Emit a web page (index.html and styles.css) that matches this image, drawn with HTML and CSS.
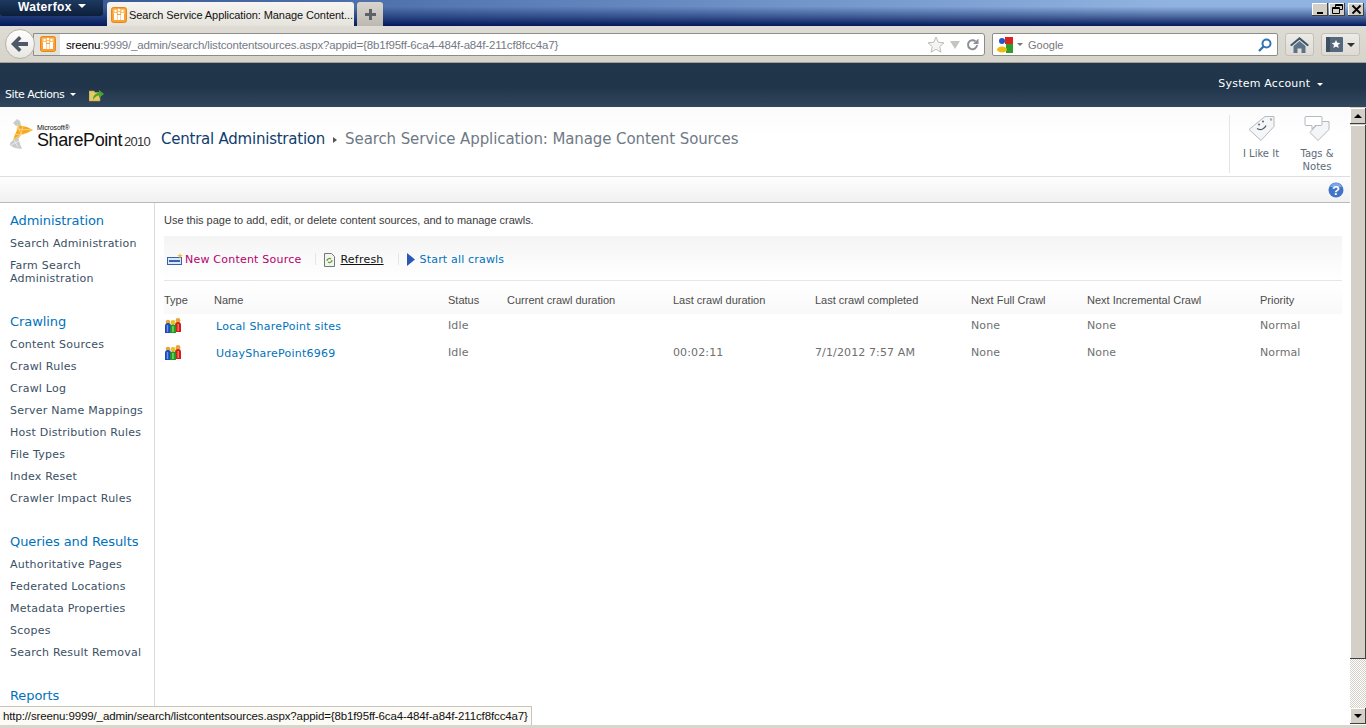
FILE: index.html
```html
<!DOCTYPE html>
<html lang="en">
<head>
<meta charset="utf-8">
<title>Search Service Application: Manage Content Sources</title>
<link rel="stylesheet" href="styles.css">
</head>
<body>
<svg class="defs" width="0" height="0" aria-hidden="true">
  <defs>
    <g id="fav">
      <rect x="0.5" y="0.5" width="15" height="15" rx="2" fill="#f9a234" stroke="#e8861a"/>
      <rect x="2" y="2" width="12" height="5" fill="#fbb964"/>
      <g fill="#fff">
        <circle cx="4.500" cy="4" r="1.200"/><rect x="3" y="6" width="3" height="7"/>
        <circle cx="8" cy="3" r="1.200"/><rect x="7" y="5" width="2" height="2"/>
        <circle cx="11.500" cy="4" r="1.200"/><rect x="10" y="6" width="3" height="7"/>
        <rect x="6.500" y="8" width="3" height="5"/>
      </g>
    </g>
    <g id="people">
      <circle cx="3" cy="4" r="2.300" fill="#e8a63a"/>
      <path d="M0 8a3 3 0 0 1 6 0v7H0z" fill="#1d49bc"/>
      <path d="M1.800 7h1.400v7H1.800z" fill="#6f97ea"/>
      <circle cx="13" cy="2.500" r="2.400" fill="#e8a63a"/>
      <path d="M10 7a3 3 0 0 1 6 0v7h-6z" fill="#cf1f18"/>
      <path d="M12.500 6h1.400v7h-1.400z" fill="#f07a70"/>
      <circle cx="8" cy="4.500" r="2.400" fill="#e6c224"/>
      <path d="M5 9.500a3 3 0 0 1 6 0V15H5z" fill="#229a24"/>
      <path d="M7.200 8h1.500v6H7.200z" fill="#7ad86c"/>
    </g>
  </defs>
</svg>
<div class="window">
  <header class="tabbar">
    <div class="appbutton">Waterfox <span class="caret caret-white"></span></div>
    <div class="tab">
      <svg class="icon16" viewBox="0 0 16 16"><use href="#fav"/></svg>
      <span class="tabtitle">Search Service Application: Manage Content...</span>
    </div>
    <div class="newtab">
      <svg width="11" height="11" viewBox="0 0 11 11"><path d="M4 0h3v4h4v3H7v4H4V7H0V4h4z" fill="#5d6269"/></svg>
    </div>
    <div class="winbuttons">
      <span class="winbtn"><svg width="11" height="11" viewBox="0 0 11 11"><rect x="2" y="8" width="6" height="2" fill="#000"/></svg></span>
      <span class="winbtn"><svg width="11" height="11" viewBox="0 0 11 11"><path d="M3.500 3V.5h7v5H8M.5 3.500h7v6h-7zM3.500 1.500h7M.5 4.500h7" fill="none" stroke="#000"/></svg></span>
      <span class="winbtn winclose"><svg width="11" height="11" viewBox="0 0 11 11"><path d="M1.500 1.500l8 8M9.500 1.500l-8 8" stroke="#000" stroke-width="1.800"/></svg></span>
    </div>
  </header>

  <nav class="navbar">
    <div class="back">
      <svg width="20" height="18" viewBox="0 0 20 18"><path d="M9 1l2.500 2.500L8 7h10v4H8l3.500 3.500L9 17 1 9z" fill="#4d5966"/></svg>
    </div>
    <div class="urlbar">
      <div class="identity"><svg class="icon16" viewBox="0 0 16 16"><use href="#fav"/></svg></div>
      <div class="url"><span class="host">sreenu</span>:9999/_admin/search/listcontentsources.aspx?appid={8b1f95ff-6ca4-484f-a84f-211cf8fcc4a7}</div>
      <svg class="star" width="18" height="17" viewBox="0 0 18 17"><path d="M9 1l2.300 5.300 5.700.5-4.300 3.800 1.300 5.600L9 13.300l-5 2.900 1.300-5.600L1 6.800l5.700-.5z" fill="#f4f4f2" stroke="#bdbdb8"/></svg>
      <span class="dropmark"></span>
      <svg class="reload" width="13" height="13" viewBox="0 0 13 13"><path d="M11 7a4.500 4.500 0 1 1-1.500-3.600" fill="none" stroke="#8a9096" stroke-width="2"/><path d="M12.500.5v5.500H7z" fill="#8a9096"/></svg>
    </div>
    <div class="searchbar">
      <svg class="gicon" width="16" height="16" viewBox="0 0 16 16">
        <rect x="8" y="0" width="8" height="7" fill="#d8261c"/>
        <rect x="0" y="0" width="8" height="8" fill="#fff"/>
        <circle cx="5" cy="4" r="3" fill="#2456c4"/>
        <rect x="9" y="7" width="7" height="9" fill="#2f9e2c"/>
        <ellipse cx="5" cy="12.500" rx="5" ry="3" fill="#eebb10"/>
      </svg>
      <span class="caret caret-grey"></span>
      <span class="searchtext">Google</span>
      <svg class="magnifier" width="14" height="14" viewBox="0 0 14 14"><circle cx="8.500" cy="5.500" r="4" fill="none" stroke="#3374b4" stroke-width="2"/><path d="M5.500 8.500L1 13" stroke="#3374b4" stroke-width="2.400"/></svg>
    </div>
    <div class="toolbtn homebtn">
      <svg width="19" height="16" viewBox="0 0 19 16"><path d="M9.500 0L19 8l-1.500 1.300L9.500 2.800 1.500 9.300 0 8z" fill="#3d5468"/><path d="M3.500 9l6-5 6 5v7h-4v-4.500h-4V16h-4z" fill="#5d7488"/></svg>
    </div>
    <div class="toolbtn bookbtn">
      <svg width="17" height="15" viewBox="0 0 17 15"><rect width="17" height="15" rx="1" fill="#56697c"/><rect width="4" height="15" fill="#3d5062"/><path d="M10 3l1.300 2.800 3 .3-2.300 2 .7 3L10 9.500l-2.700 1.600.7-3-2.300-2 3-.3z" fill="#fff"/></svg>
      <span class="caret caret-dark"></span>
    </div>
  </nav>

  <div class="suite">
    <div class="suiteleft">
      <span class="siteactions">Site Actions <span class="caret caret-small"></span></span>
      <svg class="upfolder" width="16" height="15" viewBox="0 0 16 15"><path d="M0 4h5l1 1.500h5V14H0z" fill="#e8c966" stroke="#b89a3c" stroke-width=".6"/><path d="M4 13c0-5 3-7 6-7V3l5 4-5 4V8.500c-2.500 0-4 1.500-6 4.500z" fill="#46a52e"/></svg>
    </div>
    <span class="account">System Account <span class="caret caret-small"></span></span>
  </div>

  <div class="viewport">
    <div class="page">
      <div class="titlerow">
        <div class="logo">
          <svg class="logomark" width="26" height="30" viewBox="0 0 26 30">
            <path d="M4 4l4-4 3 2 1 4-5 1z" fill="#c9cbcd"/>
            <path d="M9 6l9 2 6 3-6 3-6 2-5 6-3 2 1-6 3-7z" fill="#f6a91e"/>
            <path d="M9 6l3 10M14 7l-2 9 6-2M7 10l17 1M5 15l7 1M3 21l9-5" fill="none" stroke="#fde0a0" stroke-width=".7"/>
            <path d="M3 22c-2 2-3 3-1 5l4 2 7 1-2-5-2-7z" fill="#c8cacc"/>
            <path d="M5 21l4 7M2 26l8-4" fill="none" stroke="#fff" stroke-width=".6"/>
          </svg>
          <div class="logotext">
            <span class="ms">Microsoft®</span>
            <span class="sp">SharePoint<small class="yr">2010</small></span>
          </div>
        </div>
        <div class="crumbs">
          <span class="crumb-root">Central Administration</span>
          <span class="crumb-sep"></span>
          <span class="crumb-page">Search Service Application: Manage Content Sources</span>
        </div>
        <div class="social">
          <div class="socialitem">
            <svg width="30" height="26" viewBox="0 0 30 26"><path d="M19 1h9v10L15 25 3 14z" fill="#f4f5f6" stroke="#b4bac0"/><circle cx="25" cy="4" r="1.200" fill="#a8aeb4"/><path d="M11 13a6 6 0 0 0 9-3" fill="none" stroke="#4d5966" stroke-width="1.200"/><circle cx="13" cy="9" r=".9" fill="#4d5966"/><circle cx="17" cy="6" r=".9" fill="#4d5966"/></svg>
            <span>I Like It</span>
          </div>
          <div class="socialitem notes">
            <svg width="26" height="26" viewBox="0 0 26 26"><path d="M16 6h9v8L14 25 6 17z" fill="#f4f5f6" stroke="#b4bac0"/><path d="M2 1h15a1 1 0 0 1 1 1v7a1 1 0 0 1-1 1h-6l-3 4v-4H2a1 1 0 0 1-1-1V2a1 1 0 0 1 1-1z" fill="#fff" stroke="#b4bac0"/></svg>
            <span>Tags &amp;<br>Notes</span>
          </div>
        </div>
      </div>
      <div class="ribbonrow">
        <svg class="help" width="16" height="16" viewBox="0 0 16 16"><circle cx="8" cy="8" r="7.500" fill="#3f74c8"/><path d="M8 1a7 7 0 0 1 6 4H2a7 7 0 0 1 6-4z" fill="#7ea6e2"/><text x="8" y="12.500" text-anchor="middle" class="helpq">?</text></svg>
      </div>
      <div class="body">
        <aside class="leftnav">
          <h2 class="navhead">Administration</h2>
          <a class="navitem">Search Administration</a>
          <a class="navitem">Farm Search Administration</a>
          <h2 class="navhead gap">Crawling</h2>
          <a class="navitem">Content Sources</a>
          <a class="navitem">Crawl Rules</a>
          <a class="navitem">Crawl Log</a>
          <a class="navitem">Server Name Mappings</a>
          <a class="navitem">Host Distribution Rules</a>
          <a class="navitem">File Types</a>
          <a class="navitem">Index Reset</a>
          <a class="navitem">Crawler Impact Rules</a>
          <h2 class="navhead gap">Queries and Results</h2>
          <a class="navitem">Authoritative Pages</a>
          <a class="navitem">Federated Locations</a>
          <a class="navitem">Metadata Properties</a>
          <a class="navitem">Scopes</a>
          <a class="navitem">Search Result Removal</a>
          <h2 class="navhead gap">Reports</h2>
        </aside>
        <main class="main">
          <p class="intro">Use this page to add, edit, or delete content sources, and to manage crawls.</p>
          <div class="toolbar">
            <span class="tool tool-new">
              <svg width="17" height="13" viewBox="0 0 17 13"><rect x="0.500" y="4.500" width="14" height="7" fill="#dbe8f8" stroke="#3a62a8"/><rect x="2" y="7" width="11" height="2" fill="#3a62a8"/><path d="M13 0l.8 2L16 2.800l-2.200.8L13 6l-.8-2.400L10 2.800l2.200-.8z" fill="#f0c030"/></svg>
              New Content Source
            </span>
            <span class="toolsep"></span>
            <span class="tool tool-refresh">
              <svg width="11" height="14" viewBox="0 0 11 14"><path d="M.500.500h7l3 3v10H.500z" fill="#f4f4ec" stroke="#6e7a80"/><path d="M3 8a2.500 2.500 0 0 1 4-2M8 7a2.500 2.500 0 0 1-4 2" fill="none" stroke="#58a030" stroke-width="1.200"/></svg>
              <u>Refresh</u>
            </span>
            <span class="toolsep"></span>
            <span class="tool tool-start">
              <svg width="8" height="13" viewBox="0 0 8 13"><path d="M0 0l8 6.500L0 13z" fill="#2a58b4"/></svg>
              Start all crawls
            </span>
          </div>
          <table class="grid">
            <colgroup>
              <col class="c-type"><col class="c-name"><col class="c-status"><col class="c-cur"><col class="c-last"><col class="c-comp"><col class="c-full"><col class="c-inc"><col class="c-pri">
            </colgroup>
            <thead>
              <tr><th>Type</th><th>Name</th><th>Status</th><th>Current crawl duration</th><th>Last crawl duration</th><th>Last crawl completed</th><th>Next Full Crawl</th><th>Next Incremental Crawl</th><th>Priority</th></tr>
            </thead>
            <tbody>
              <tr class="row1">
                <td><svg class="people" width="16" height="15" viewBox="0 0 16 15"><use href="#people"/></svg></td>
                <td><a class="srclink">Local SharePoint sites</a></td>
                <td>Idle</td><td></td><td></td><td></td><td>None</td><td>None</td><td>Normal</td>
              </tr>
              <tr class="row2">
                <td><svg class="people" width="16" height="15" viewBox="0 0 16 15"><use href="#people"/></svg></td>
                <td><a class="srclink">UdaySharePoint6969</a></td>
                <td>Idle</td><td></td><td>00:02:11</td><td>7/1/2012 7:57 AM</td><td>None</td><td>None</td><td>Normal</td>
              </tr>
            </tbody>
          </table>
        </main>
      </div>
    </div>
    <div class="scrollbar">
      <div class="sbbtn"><span class="arrow-up"></span></div>
      <div class="sbthumb"></div>
      <div class="sbtrack"></div>
      <div class="sbbtn"><span class="arrow-down"></span></div>
    </div>
  </div>
  <div class="bottomstrip"></div>
  <div class="statuspanel">http://sreenu:9999/_admin/search/listcontentsources.aspx?appid={8b1f95ff-6ca4-484f-a84f-211cf8fcc4a7}</div>
</div>
</body>
</html>
```
FILE: styles.css
```css
* { box-sizing: border-box; }
html, body { margin: 0; padding: 0; height: 100%; overflow: hidden; }
body { font-family: "DejaVu Sans", Verdana, sans-serif; font-size: 11px; color: #3b4f65; background: #fff; }
.defs { position: absolute; }
.window { position: relative; width: 1366px; height: 728px; display: flex; flex-direction: column; overflow: hidden; }

.caret { display: inline-block; width: 0; height: 0; border-left: 4px solid transparent; border-right: 4px solid transparent; border-top: 4px solid #fff; vertical-align: middle; }
.caret-white { margin-left: 3px; margin-top: -3px; }
.caret-grey { border-left-width: 3px; border-right-width: 3px; border-top: 3px solid #777; margin-left: 4px; }
.caret-dark { border-top-color: #333; margin-left: 4px; }
.caret-small { border-left-width: 3px; border-right-width: 3px; border-top-width: 3px; margin-left: 3px; }

.tabbar { height: 26px; flex: none; display: flex; align-items: flex-start; background: linear-gradient(to bottom, rgba(4,24,90,0) 25%, rgba(4,24,90,.5) 65%, #04185a 100%), linear-gradient(to right, #34538e, #5d80ba 40%, #8fb2e0 85%); position: relative; }
.appbutton { width: 103px; height: 16px; background: linear-gradient(to bottom, #1d3a60, #0d1f3a); border-radius: 0 0 3px 3px; color: #fff; font: bold 12px/15px "Liberation Sans", Arial, sans-serif; letter-spacing: .35px; padding-left: 18px; white-space: nowrap; }
.tab { width: 247px; height: 24px; margin: 2px 0 0 4px; background: linear-gradient(to bottom, #f6f5f2, #e6e3dc); border-radius: 3px 3px 0 0; display: flex; align-items: center; padding: 2px 0 0 4px; gap: 2px; }
.icon16 { width: 16px; height: 16px; flex: none; display: block; }
.tabtitle { font: 11px/16px "Liberation Sans", Arial, sans-serif; color: #111; white-space: nowrap; letter-spacing: -.08px; }
.newtab { width: 26px; height: 24px; margin: 2px 0 0 3px; background: linear-gradient(to bottom, #d8d5cf, #bdb9b1); border-radius: 3px 3px 0 0; display: flex; align-items: center; justify-content: center; }
.winbuttons { margin-left: auto; margin-right: 2px; margin-top: 3px; display: flex; gap: 1px; }
.winbtn { width: 16px; height: 13px; background: #d4d0c8; box-shadow: inset -1px -1px 0 #404040, inset 1px 1px 0 #fff; display: flex; align-items: center; justify-content: center; }
.winclose { margin-left: 2px; }

.navbar { height: 37px; flex: none; display: flex; align-items: flex-start; padding-top: 7px; background: linear-gradient(to bottom, #dfdcd5, #d6d3cb); border-bottom: 1px solid #a5a19a; position: relative; }
.back { width: 30px; height: 30px; border-radius: 50%; margin: -4px 0 0 5px; background: linear-gradient(to bottom, #fff, #e8e6e1); border: 1px solid #b5b2ab; display: flex; align-items: center; justify-content: center; position: relative; z-index: 1; }
.urlbar { width: 952px; height: 23px; margin-left: -2px; background: #fff; border: 1px solid #8c8c88; border-radius: 0 3px 3px 0; display: flex; align-items: center; padding-right: 5px; }
.identity { width: 26px; height: 21px; background: #e4e2dc; padding: 2px 0 0 6px; margin-right: 6px; flex: none; }
.url { flex: 1; font: 11.5px/16px "Liberation Sans", Arial, sans-serif; letter-spacing: -.17px; color: #737a85; white-space: nowrap; overflow: hidden; }
.host { color: #000; }
.star { margin-right: 5px; }
.dropmark { width: 0; height: 0; border-left: 5px solid transparent; border-right: 5px solid transparent; border-top: 8px solid #c4c4c0; margin-right: 6px; }
.reload { flex: none; }
.searchbar { width: 286px; height: 23px; margin-left: 7px; background: #fff; border: 1px solid #8c8c88; border-radius: 2px; display: flex; align-items: center; padding: 0 4px; }
.gicon { flex: none; }
.searchtext { font: 11px/16px "Liberation Sans", Arial, sans-serif; color: #777; margin-left: 5px; }
.magnifier { margin-left: auto; margin-right: 1px; }
.toolbtn { height: 23px; background: linear-gradient(to bottom, #ecebe6, #dedbd4); border: 1px solid #c3c0b9; border-radius: 3px; display: flex; align-items: center; justify-content: center; }
.homebtn { width: 29px; margin-left: 7px; }
.bookbtn { width: 39px; margin-left: 7px; }

.suite { height: 44px; flex: none; background: linear-gradient(to bottom, #21364b, #20354a 24px, #31475e); color: #fff; display: flex; justify-content: space-between; position: relative; }
.suiteleft { display: flex; align-items: center; padding-top: 19px; padding-left: 5px; height: 100%; }
.siteactions { font: 11px/24px "DejaVu Sans", sans-serif; letter-spacing: -.45px; color: #fff; }
.upfolder { margin: -1px 0 0 13px; }
.account { font-size: 11px; line-height: 14px; margin: 14px 43px 0 0; color: #fff; letter-spacing: .22px; }

.viewport { height: 617px; flex: none; display: flex; }
.page { flex: 1; min-width: 0; display: flex; flex-direction: column; overflow: hidden; }
.titlerow { height: 70px; flex: none; background: linear-gradient(to bottom, #fbfbfb, #fff 30px); border-bottom: 1px solid #dedede; display: flex; align-items: flex-start; padding-left: 9px; }
.logo { display: flex; align-items: flex-start; padding-top: 12px; width: 152px; flex: none; }
.logomark { flex: none; }
.logotext { display: flex; flex-direction: column; margin-left: 2px; padding-top: 6px; color: #111; font-family: "Liberation Sans", Arial, sans-serif; }
.ms { font-size: 7px; line-height: 6px; letter-spacing: -.1px; }
.sp { font-size: 18px; line-height: 18px; letter-spacing: -.4px; white-space: nowrap; }
.yr { font-size: 13px; margin-left: 2px; letter-spacing: -.75px; color: #333; }
.crumbs { display: flex; align-items: center; height: 64px; font-size: 15px; white-space: nowrap; }
.crumb-root { color: #0f3d6e; letter-spacing: -.23px; }
.crumb-sep { width: 0; height: 0; border-top: 3px solid transparent; border-bottom: 3px solid transparent; border-left: 4px solid #555; margin: 2px 8px 0 8px; }
.crumb-page { color: #6f7a86; letter-spacing: -.1px; }
.social { margin-left: auto; height: 58px; margin-top: 8px; border-left: 1px solid #e4e4e4; display: flex; padding-left: 12px; gap: 18px; margin-right: 14px; }
.socialitem { display: flex; flex-direction: column; align-items: center; font: 10px/13px "DejaVu Sans", sans-serif; color: #5d6a7a; text-align: center; width: 38px; margin-top: -8px; padding-top: 8px; }
.socialitem svg { height: 27px; margin-bottom: 5px; flex: none; }
.ribbonrow { height: 26px; flex: none; background: linear-gradient(to bottom, #fdfdfd, #f1f1f1); border-bottom: 1px solid #b9b9b9; display: flex; justify-content: flex-end; padding: 5px 6px 0 0; }
.help { display: block; }
.helpq { font: bold 13px "Liberation Sans", sans-serif; fill: #fff; }
.body { flex: 1; min-height: 0; display: flex; overflow: hidden; }
.leftnav { width: 155px; flex: none; border-right: 1px solid #dbdbdb; padding: 10px 0 0 10px; background: #fff; }
.navhead { margin: 0 0 4px; font-size: 13px; line-height: 16px; font-weight: normal; color: #0072bc; letter-spacing: -.08px; }
.navhead.gap { margin-top: 24px; }
.navitem { display: block; padding: 4px 6px 5px 0; font-size: 11px; line-height: 13px; letter-spacing: .23px; color: #3b4f65; }
.main { flex: 1; min-width: 0; padding: 0 8px 0 9px; }
.intro { margin: 10px 0 0; font: 11px/14px "Liberation Sans", Arial, sans-serif; color: #3b3b3b; letter-spacing: -.02px; }
.toolbar { height: 45px; margin-top: 9px; background: linear-gradient(to bottom, #f4f4f4, #fbfbfb 60%, #fff); border-bottom: 1px solid #e6e6e6; display: flex; align-items: center; padding: 1px 0 0 3px; }
.tool { display: flex; align-items: center; gap: 1px; font-size: 11px; letter-spacing: .22px; white-space: nowrap; position: relative; top: 1px; }
.toolsep { width: 1px; height: 12px; background: #e6e6e6; margin: 0 8px 0 14px; }
.tool-new { color: #b5006e; }
.tool-refresh { color: #111; gap: 5px; }
.tool-start { color: #0072bc; gap: 5px; letter-spacing: .18px; }
.grid { table-layout: fixed; border-collapse: collapse; width: 1178px; font-size: 11px; }
.c-type { width: 50px; } .c-name { width: 234px; } .c-status { width: 59px; } .c-cur { width: 166px; } .c-last { width: 142px; } .c-comp { width: 156px; } .c-full { width: 116px; } .c-inc { width: 173px; } .c-pri { width: 82px; }
.grid th { height: 33px; padding: 4px 0 0 0; text-align: left; font: 11px "Liberation Sans", Arial, sans-serif; color: #4c4c4c; white-space: nowrap; background: linear-gradient(to bottom, #fff, #f9f9f9); }
.grid td { padding: 0; color: #6f6f6f; letter-spacing: .12px; white-space: nowrap; vertical-align: middle; }
.row1 td { height: 24px; position: relative; top: -1px; }
.row2 td { height: 30px; position: relative; top: -1px; }
.people { display: block; margin-left: 1px; }
.srclink { color: #0072bc; margin-left: 2px; letter-spacing: .23px; position: relative; top: 1px; }

.scrollbar { width: 16px; flex: none; display: flex; flex-direction: column; background: #d4d0c8; padding-top: 1px; }
.sbbtn { height: 16px; flex: none; background: #d4d0c8; box-shadow: inset -1px -1px 0 #404040, inset 1px 1px 0 #fff; display: flex; align-items: center; justify-content: center; }
.sbthumb { height: 534px; flex: none; margin-top: 1px; background: #d4d0c8; box-shadow: inset -1px -1px 0 #404040, inset 1px 1px 0 #fff; }
.sbtrack { flex: 1; background: repeating-conic-gradient(#d4d0c8 0 25%, #fff 0 50%) 0 0 / 2px 2px; }
.arrow-up { width: 0; height: 0; border-left: 4px solid transparent; border-right: 4px solid transparent; border-bottom: 4px solid #000; }
.arrow-down { width: 0; height: 0; border-left: 4px solid transparent; border-right: 4px solid transparent; border-top: 4px solid #000; }
.bottomstrip { height: 4px; flex: none; background: #d9d6ce; border-top: 1px solid #fff; }
.statuspanel { position: absolute; left: 0; top: 706px; width: 532px; height: 19px; background: #fbfaf5; border: 1px solid #c8c5bd; border-left: 0; border-bottom: 0; font: 11.5px/19px "Liberation Sans", Arial, sans-serif; letter-spacing: -.12px; color: #111; padding-left: 3px; white-space: nowrap; overflow: hidden; }
```
